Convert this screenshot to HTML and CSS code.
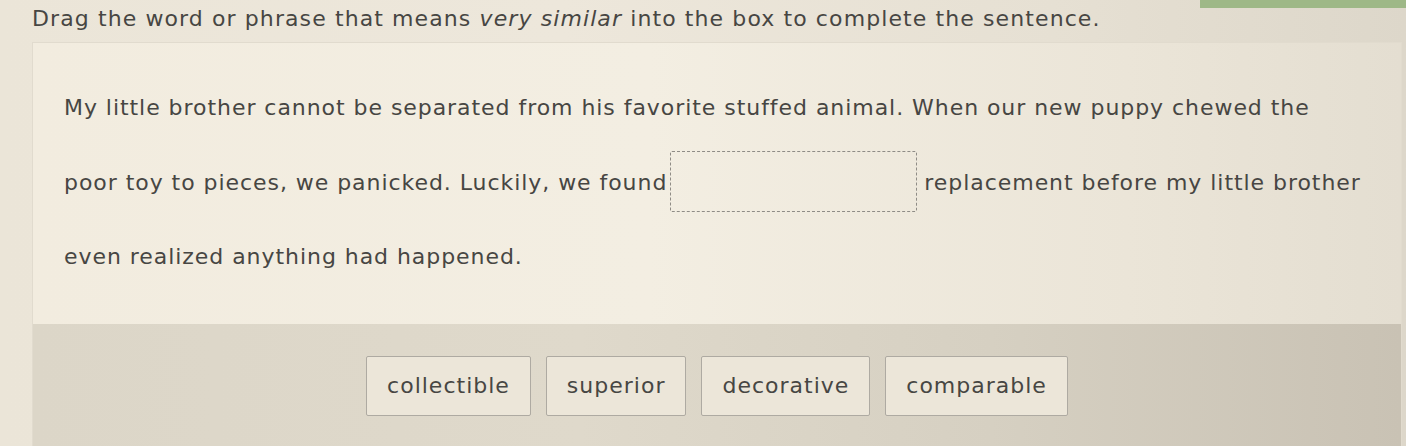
FILE: index.html
```html
<!DOCTYPE html>
<html>
<head>
<meta charset="utf-8">
<link rel="stylesheet" href="styles.css">
</head>
<body>
<div class="topbar"><div class="green"></div></div>
<div class="instr">Drag the word or phrase that means <em>very similar</em> into the box to complete the sentence.</div>
<div class="card">
  <div class="passage">
    <p>My little brother cannot be separated from his favorite stuffed animal. When our new puppy chewed the</p>
    <p>poor toy to pieces, we panicked. Luckily, we found<span class="drop"></span>replacement before my little brother</p>
    <p>even realized anything had happened.</p>
  </div>
  <div class="tray">
    <div class="chip">collectible</div>
    <div class="chip">superior</div>
    <div class="chip">decorative</div>
    <div class="chip">comparable</div>
  </div>
</div>
</body>
</html>
```
FILE: styles.css
```css
html, body {
  margin: 0;
  height: 100%;
}
body {
  display: flex;
  flex-direction: column;
  background: linear-gradient(90deg, #ebe5d8 0%, #ede7db 40%, #e6e0d3 75%, #ddd7ca 100%);
  font-family: "DejaVu Sans", "Liberation Sans", sans-serif;
  color: #474643;
  overflow: hidden;
}
.topbar {
  display: flex;
  justify-content: flex-end;
  height: 0;
}
.green {
  width: 206px;
  height: 8px;
  background: #9eb887;
  flex: none;
}
.instr {
  padding: 5px 0 0 32px;
  height: 42px;
  box-sizing: border-box;
  font-size: 22px;
  line-height: 28px;
  letter-spacing: 1.1px;
  white-space: nowrap;
}
.instr em {
  font-style: oblique;
}
.card {
  flex: 1;
  display: flex;
  flex-direction: column;
  margin: 0 4px 0 32px;
  border: 1px solid #e1dbce;
  border-bottom: none;
  background: linear-gradient(90deg, #f2ecdf 0%, #f3eee2 45%, #ebe5d8 80%, #e4ded1 100%);
}
.passage {
  padding: 28px 0 29px 31px;
  font-size: 22px;
  letter-spacing: 0.95px;
}
.passage p {
  margin: 0;
  line-height: 74.5px;
  height: 74.5px;
  white-space: nowrap;
}
.drop {
  display: inline-block;
  width: 245px;
  height: 59px;
  border: 1px dashed #8f8c86;
  border-radius: 2px;
  vertical-align: middle;
  margin: -4px 7px 0 3px;
}
.tray {
  flex: 1;
  display: flex;
  justify-content: center;
  align-items: flex-start;
  gap: 15px;
  padding-top: 32px;
  background: linear-gradient(90deg, #dcd6c8 0%, #dfd9cb 40%, #d6d0c2 70%, #c9c2b4 100%);
}
.chip {
  height: 58px;
  padding: 0 20px;
  border: 1px solid #aeaaa2;
  border-radius: 2px;
  background: #ece6d9;
  font-size: 22px;
  line-height: 58px;
  letter-spacing: 1px;
  color: #474643;
}
```
